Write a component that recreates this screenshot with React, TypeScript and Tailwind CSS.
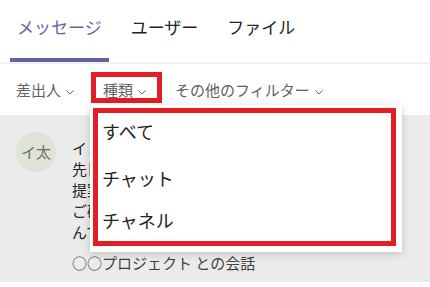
import React from "react";

const font = { fontFamily: '"Noto Sans CJK JP", "Noto Sans", sans-serif' };

function Chevron() {
  return (
    <svg width="8" height="5" viewBox="0 0 8 5" className="shrink-0">
      <polyline points="0.5,0.5 4,4 7.5,0.5" fill="none" stroke="#616161" strokeWidth="1" />
    </svg>
  );
}

type FilterProps = { label: string; marked?: boolean };

function FilterButton({ label, marked }: FilterProps) {
  return (
    <div
      className={
        "flex h-[31px] items-end gap-[5px] border-[5px] pl-[7px] pr-[11px] " +
        (marked ? "border-[#e31e24]" : "border-transparent")
      }
    >
      <span className="text-[15px] leading-[16px] text-[#616161]">{label}</span>
      <span className="pb-[3px]">
        <Chevron />
      </span>
    </div>
  );
}

const tabs = ["メッセージ", "ユーザー", "ファイル"];

// preview lines sit under the open menu, only their first glyph shows
const preview = [
  "イノベーション太郎",
  "先日ご依頼いただいた資料の件について",
  "提案書の最新版を共有します。",
  "ご確認をお願いします。",
  "んでください。",
];

export default function App() {
  return (
    <div className="relative h-[287px] w-[430px] overflow-hidden bg-white" style={font}>
      {/* tabs */}
      <div className="flex h-[62px] gap-[15px] pl-[10px]">
        {tabs.map((t, i) => (
          <div key={t} className="flex flex-col">
            <div
              className={
                "flex flex-1 items-center px-[7px] pb-[4px] text-[17px] " +
                (i === 0 ? "text-[#6264a7]" : "text-[#252423]")
              }
            >
              {t}
            </div>
            <div className={"h-[4px] " + (i === 0 ? "bg-[#6264a7]" : "bg-transparent")} />
          </div>
        ))}
      </div>
      <div className="h-[2px] bg-[#f0f0f0]" />

      {/* filters */}
      <div className="flex h-[51px] items-start gap-[1px] pl-[4px] pt-[8px]">
        <FilterButton label="差出人" />
        <FilterButton label="種類" marked />
        <FilterButton label="その他のフィルター" />
      </div>

      {/* results */}
      <div className="flex h-[167px] gap-[16px] bg-[#ebebeb] pl-[16px] pt-[17px]">
        <div className="flex h-[40px] w-[40px] shrink-0 items-center justify-center rounded-full bg-[#dde3d7] text-[15px] text-[#6b6b6b]">
          イ太
        </div>
        <div className="flex flex-col pt-[5px] text-[15px] leading-[21px] text-[#252423]">
          <div className="w-[18px] overflow-hidden">
            {preview.map(l => (
              <div key={l} className="whitespace-nowrap">
                {l}
              </div>
            ))}
          </div>
          <div className="mt-[10px] whitespace-nowrap text-[#424242]">○○プロジェクト との会話</div>
        </div>
      </div>

      {/* type menu */}
      <div className="absolute left-[90px] top-[105px] w-[312px] bg-white pb-[6px] pl-[3px] pr-[6px] pt-[3px] shadow-[0_2px_8px_rgba(0,0,0,0.18)]">
        <div className="flex h-[138px] flex-col border-[5px] border-[#e31e24] pl-[4px] text-[18px] leading-[24px] text-[#252423]">
          <div className="mt-[6px]">すべて</div>
          <div className="mt-[23px]">チャット</div>
          <div className="mt-[18px]">チャネル</div>
        </div>
      </div>
    </div>
  );
}
